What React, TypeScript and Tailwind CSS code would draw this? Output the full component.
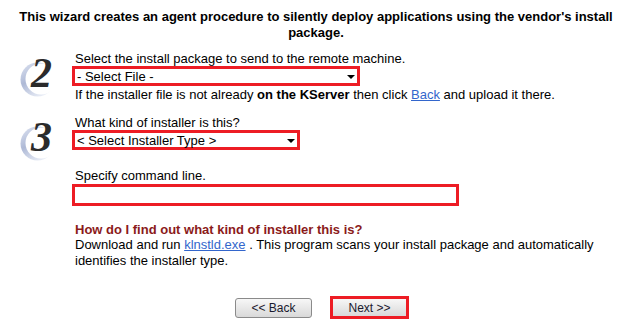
import React from 'react';

const Numeral: React.FC<{ n: string }> = ({ n }) => (
  <div className="relative w-[72px] h-[40px]">
    <svg className="absolute left-[20px] top-[11px]" width="36" height="36" viewBox="0 0 36 36">
      <defs>
        <linearGradient id={`cres${n}`} x1="0" y1="0" x2="0.6" y2="1">
          <stop offset="0" stopColor="#dfe5f2" />
          <stop offset="0.5" stopColor="#aeb9d6" />
          <stop offset="1" stopColor="#e9edf6" />
        </linearGradient>
        <mask id={`m${n}`}>
          <rect width="36" height="36" fill="white" />
          <circle cx="21" cy="17" r="15.5" fill="black" />
        </mask>
      </defs>
      <circle cx="17.5" cy="17.5" r="17" fill={`url(#cres${n})`} mask={`url(#m${n})`} />
    </svg>
    <span
      className="absolute left-[31px] top-[1px] text-[42px] font-bold italic text-[#2b2b2b] leading-none"
      style={{ fontFamily: '"Liberation Serif", serif' }}
    >
      {n}
    </span>
  </div>
);

const FakeSelect: React.FC<{ label: string; width: string }> = ({ label, width }) => (
  <div className={`border-[3px] border-[#ed1c24] ${width} h-[20px] bg-white flex items-center justify-between pl-[2px] pr-[2px]`}>
    <span className="leading-none">{label}</span>
    <span className="w-0 h-0 border-l-[4px] border-r-[4px] border-t-[4px] border-l-transparent border-r-transparent border-t-black mt-[2px]" />
  </div>
);

const App: React.FC = () => {
  return (
    <div className="w-[632px] h-[336px] bg-white text-[13px] leading-[15px] text-black" style={{ fontFamily: '"Liberation Sans", Arial, sans-serif' }}>
      <p className="pt-[9px] px-[12px] text-center font-bold leading-[16px]">
        This wizard creates an agent procedure to silently deploy applications using the vendor's install package.
      </p>

      <div className="flex mt-[10px]">
        <Numeral n="2" />
        <div className="flex flex-col">
          <p className="pl-[3px]">Select the install package to send to the remote machine.</p>
          <FakeSelect label="- Select File -" width="w-[288px]" />
          <p className="pl-[3px] mt-[1px]">
            If the installer file is not already <b>on the KServer</b> then click{' '}
            <a className="text-[#3366cc] underline">Back</a> and upload it there.
          </p>
        </div>
      </div>

      <div className="flex mt-[13px]">
        <Numeral n="3" />
        <div className="flex flex-col">
          <p className="pl-[3px]">What kind of installer is this?</p>
          <FakeSelect label="< Select Installer Type >" width="w-[228px]" />
          <p className="pl-[3px] mt-[18px]">Specify command line.</p>
          <div className="border-[3px] border-[#ed1c24] w-[387px] h-[22px] bg-white mt-px" />
          <p className="pl-[3px] mt-[16px] font-bold text-[#8b1a1a]">How do I find out what kind of installer this is?</p>
          <p className="pl-[3px] leading-[16px] w-[540px]">
            Download and run <a className="text-[#3366cc] underline">klnstld.exe</a> . This program scans your install package and automatically identifies the installer type.
          </p>
        </div>
      </div>

      <div className="flex items-center ml-[235px] mt-[27px] gap-[18px]">
        <button className="w-[77px] h-[20px] border border-[#8a8a8a] rounded-[3px] bg-gradient-to-b from-[#f7f7f7] to-[#d9d9d9] text-[12px] leading-none text-[#1a1a2e]">
          &lt;&lt; Back
        </button>
        <div className="border-[3px] border-[#ed1c24] p-0">
          <button className="w-[73px] h-[17px] bg-gradient-to-b from-[#f7f7f7] to-[#d9d9d9] text-[12px] leading-none text-[#1a1a2e]">
            Next &gt;&gt;
          </button>
        </div>
      </div>
    </div>
  );
};

export default App;
